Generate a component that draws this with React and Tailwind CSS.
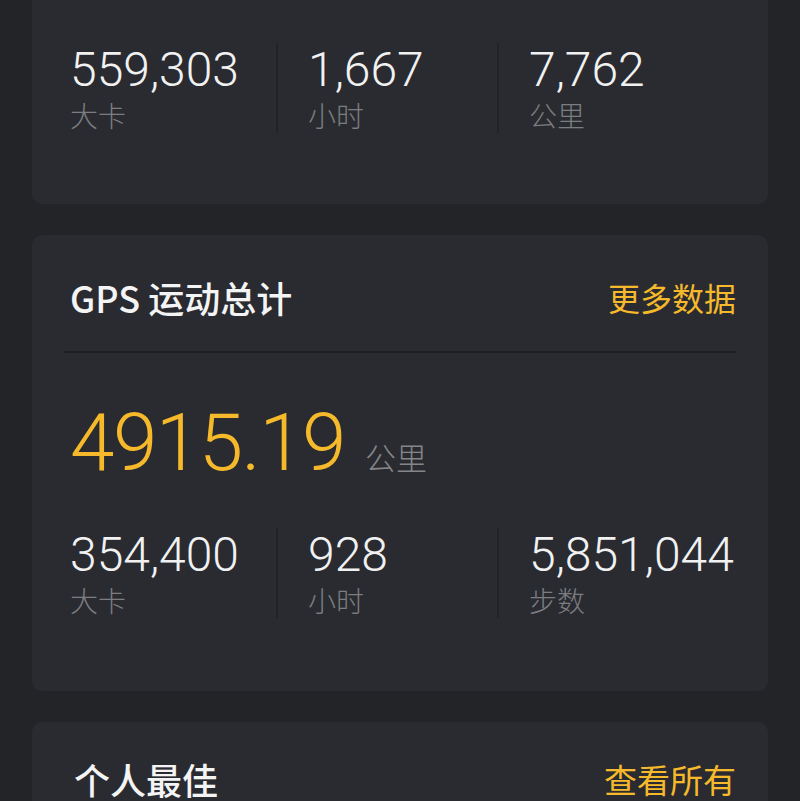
import React from "react";

const numFont = { fontFamily: '"Roboto", "Liberation Sans", sans-serif' };

const totals = [
  { value: "559,303", label: "大卡" },
  { value: "1,667", label: "小时" },
  { value: "7,762", label: "公里" },
];

const gpsStats = [
  { value: "354,400", label: "大卡" },
  { value: "928", label: "小时" },
  { value: "5,851,044", label: "步数" },
];

const colClass = [
  "w-[206px] shrink-0",
  "w-[221px] shrink-0 border-l-2 border-[#222328] pl-[30px]",
  "flex-1 border-l-2 border-[#222328] pl-[30px]",
];

const StatRow = ({ items }) => (
  <div className="flex">
    {items.map((item, i) => (
      <div key={item.label + i} className={colClass[i]}>
        <div
          style={numFont}
          className="text-[48px] font-light leading-[54px] text-[#f1f1f2]"
        >
          {item.value}
        </div>
        <div className="text-[28px] font-light leading-[36px] text-[#7c7d81]">
          {item.label}
        </div>
      </div>
    ))}
  </div>
);

const CardHeader = ({ title, action, big }) => (
  <div
    className={
      big
        ? "flex h-[114px] items-center justify-between"
        : "flex h-[116px] items-center justify-between pt-[8px]"
    }
  >
    <h2
      className={
        big
          ? "text-[36px] font-medium leading-[36px] text-[#f4f4f5]"
          : "text-[36px] font-medium leading-[44px] text-[#f4f4f5]"
      }
    >
      {title}
    </h2>
    <span
      className={
        big
          ? "text-[33px] leading-[36px] text-[#f6b92b]"
          : "text-[32px] leading-[44px] text-[#f6b92b]"
      }
    >
      {action}
    </span>
  </div>
);

export default function App() {
  return (
    <div className="h-[801px] w-full overflow-hidden bg-[#222428] px-8 font-['Noto_Sans_CJK_SC','Noto_Sans',sans-serif]">
      <div className="flex flex-col gap-[31px]">
        {/* 总计 */}
        <section className="rounded-b-[10px] bg-[#292b30] pb-[71px] pl-[38px] pr-8 pt-[43px]">
          <StatRow items={totals} />
        </section>

        {/* GPS 运动总计 */}
        <section className="rounded-[10px] bg-[#292b30] pb-[73px] pl-[38px] pr-8">
          <CardHeader title="GPS 运动总计" action="更多数据" />
          <div className="-ml-[6px] h-[2px] bg-[#1e1f22]" />
          <div className="mt-[50px] flex items-baseline">
            <span
              style={numFont}
              className="text-[80px] font-light leading-[80px] tracking-[-1.5px] text-[#f6b92b]"
            >
              4915.19
            </span>
            <span className="ml-[20px] text-[31px] font-light text-[#85868a]">
              公里
            </span>
          </div>
          <div className="mt-[45px]">
            <StatRow items={gpsStats} />
          </div>
        </section>

        {/* 个人最佳 */}
        <section className="h-[200px] shrink-0 rounded-[10px] bg-[#292b30] pl-[42px] pr-8">
          <CardHeader title="个人最佳" action="查看所有" big />
        </section>
      </div>
    </div>
  );
}
